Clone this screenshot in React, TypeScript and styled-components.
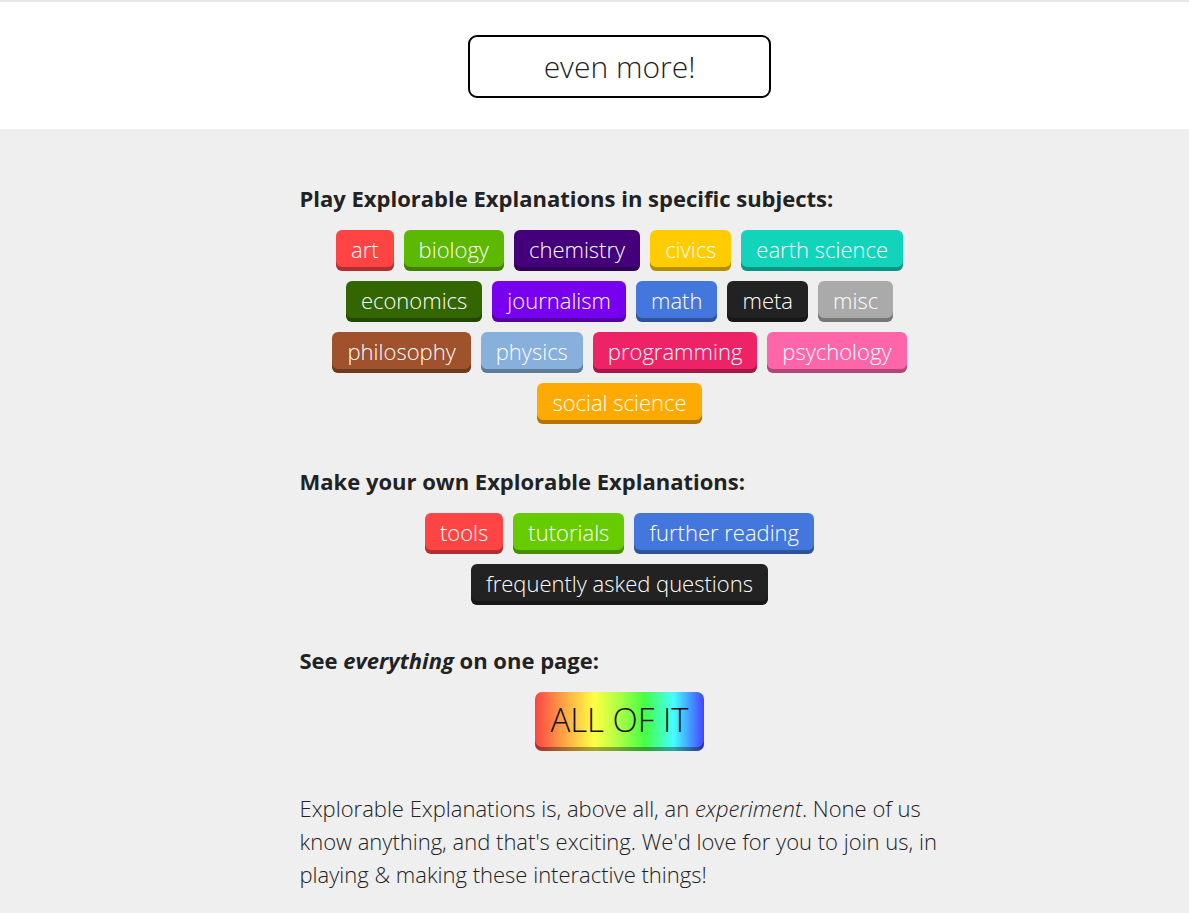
import * as React from "react";
import styled, { createGlobalStyle } from "styled-components";

const GlobalStyle = createGlobalStyle`
  body {
    margin: 0;
    background: #efefef;
    font-family: "Open Sans", "Liberation Sans", sans-serif;
    color: #222;
  }
`;

interface Tag {
  label: string;
  color: string;
}

const subjects: Tag[][] = [
  [
    { label: "art", color: "#ff4444" },
    { label: "biology", color: "#5cb800" },
    { label: "chemistry", color: "#44007a" },
    { label: "civics", color: "#ffcc00" },
    { label: "earth science", color: "#11d4bb" },
  ],
  [
    { label: "economics", color: "#336600" },
    { label: "journalism", color: "#7700ee" },
    { label: "math", color: "#4477dd" },
    { label: "meta", color: "#222222" },
    { label: "misc", color: "#aaaaaa" },
  ],
  [
    { label: "philosophy", color: "#a0522d" },
    { label: "physics", color: "#88b0dd" },
    { label: "programming", color: "#ee2266" },
    { label: "psychology", color: "#ff66aa" },
  ],
  [{ label: "social science", color: "#ffaa00" }],
];

const makers: Tag[][] = [
  [
    { label: "tools", color: "#ff4444" },
    { label: "tutorials", color: "#66cc00" },
    { label: "further reading", color: "#4477dd" },
  ],
  [{ label: "frequently asked questions", color: "#222222" }],
];

const App: React.FC = () => {
  return (
    <>
      <GlobalStyle />
      <TopBand>
        <MoreButton>even more!</MoreButton>
      </TopBand>
      <Main>
        <Column>
          <Heading>Play Explorable Explanations in specific subjects:</Heading>
          <TagBlock>
            {subjects.map((row, i) => (
              <TagRow key={i}>
                {row.map((t) => (
                  <TagButton key={t.label} $color={t.color}>
                    {t.label}
                  </TagButton>
                ))}
              </TagRow>
            ))}
          </TagBlock>

          <Heading>Make your own Explorable Explanations:</Heading>
          <TagBlock $after={40}>
            {makers.map((row, i) => (
              <TagRow key={i}>
                {row.map((t) => (
                  <TagButton key={t.label} $color={t.color}>
                    {t.label}
                  </TagButton>
                ))}
              </TagRow>
            ))}
          </TagBlock>

          <Heading>
            See <em>everything</em> on one page:
          </Heading>
          <TagBlock $after={41}>
            <TagRow>
              <RainbowButton>ALL OF IT</RainbowButton>
            </TagRow>
          </TagBlock>

          <Blurb>
            Explorable Explanations is, above all, an <em>experiment</em>. None
            of us know anything, and that's exciting. We'd love for you to join
            us, in playing &amp; making these interactive things!
          </Blurb>
        </Column>
      </Main>
    </>
  );
};

const TopBand = styled.div`
  background: #fff;
  border-top: 2px solid #e6e6e6;
  height: 129px;
  display: flex;
  justify-content: center;
  padding: 33px 0 0 50px;
  box-sizing: border-box;
`;

const MoreButton = styled.div`
  width: 303px;
  height: 63px;
  box-sizing: border-box;
  border: 2px solid #000;
  border-radius: 9px;
  display: flex;
  align-items: center;
  justify-content: center;
  font-size: 30px;
  font-weight: 300;
  color: #222;
`;

const Main = styled.div`
  display: flex;
  justify-content: center;
  padding: 54px 0 40px 50px;
`;

const Column = styled.div`
  width: 640px;
`;

const Heading = styled.h3`
  margin: 0 0 17px;
  font-size: 22px;
  font-weight: 700;
  line-height: 30px;
  color: #222;

  em {
    font-style: italic;
  }
`;

const TagBlock = styled.div<{ $after?: number }>`
  display: flex;
  flex-direction: column;
  gap: 10px;
  margin-bottom: ${(p) => p.$after ?? 42}px;
`;

const TagRow = styled.div`
  display: flex;
  justify-content: center;
  gap: 10px;
`;

const TagButton = styled.div<{ $color: string }>`
  background: ${(p) => p.$color};
  color: #fff;
  font-size: 22px;
  font-weight: 300;
  line-height: 38px;
  height: 41px;
  box-sizing: border-box;
  padding: 0 15px 3px;
  border-radius: 6px;
  box-shadow: inset 0 -4px 0 rgba(0, 0, 0, 0.3);
  white-space: nowrap;
`;

const RainbowButton = styled.div`
  background: linear-gradient(
    90deg,
    #ff4444 0%,
    #ffaa44 18%,
    #ffff44 35%,
    #aaff44 50%,
    #44ff44 65%,
    #44ffff 82%,
    #4444ff 100%
  );
  color: #111;
  font-size: 33px;
  font-weight: 300;
  line-height: 55px;
  height: 59px;
  box-sizing: border-box;
  padding: 0 15px 4px;
  border-radius: 7px;
  box-shadow: inset 0 -4px 0 rgba(0, 0, 0, 0.35);
  white-space: nowrap;
`;

const Blurb = styled.p`
  margin: 0;
  font-size: 22px;
  font-weight: 300;
  line-height: 33px;
  color: #222;

  em {
    font-weight: 300;
  }
`;

export default App;
